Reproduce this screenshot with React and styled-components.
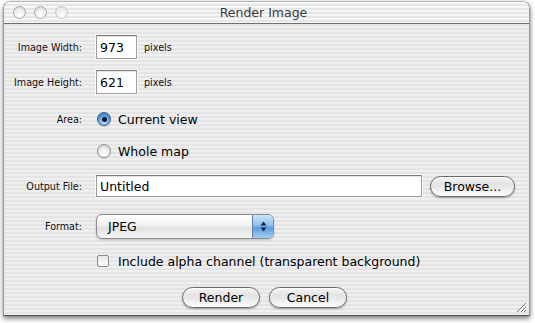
import React from "react";
import styled, { createGlobalStyle } from "styled-components";

const Global = createGlobalStyle`
  html, body { margin: 0; padding: 0; background: #ffffff; }
  body { font-family: "DejaVu Sans", "Liberation Sans", sans-serif; }
`;

const Page = styled.div`
  width: 535px;
  height: 323px;
  padding: 1px 5px 0 3px;
  box-sizing: border-box;
  overflow: hidden;
`;

const Window = styled.div`
  position: relative;
  width: 527px;
  height: 315px;
  box-sizing: border-box;
  border: 1px solid #9a9a9a;
  border-top-color: #b8b8b8;
  border-bottom-color: #555;
  border-radius: 7px 7px 0 0;
  background: repeating-linear-gradient(180deg, #efefef 0px, #efefef 2px, #e4e4e4 2px, #e4e4e4 4px);
  box-shadow: 0 3px 5px rgba(0,0,0,0.45), 1px 0 3px rgba(0,0,0,0.15);
  display: flex;
  flex-direction: column;
`;

const TitleBar = styled.div`
  height: 22px;
  flex: none;
  box-sizing: border-box;
  border-bottom: 1px solid #6e6e6e;
  border-radius: 6px 6px 0 0;
  background: repeating-linear-gradient(180deg, #f6f6f6 0px, #f6f6f6 2px, #e6e6e6 2px, #e6e6e6 4px);
  display: flex;
  align-items: center;
  padding-left: 9px;
  position: relative;
`;

const Lights = styled.div`
  display: flex;
  gap: 8px;
  align-items: center;
`;

const Light = styled.span`
  width: 13px;
  height: 13px;
  border-radius: 50%;
  box-sizing: border-box;
  border: 1px solid ${(p) => (p.$faded ? "#c8c8c8" : "#a8a8a8")};
  background: radial-gradient(circle at 50% 70%, #ffffff 0%, #eeeeee 50%, ${(p) => (p.$faded ? "#dedede" : "#cfcfcf")} 100%);
`;

const Title = styled.div`
  flex: 1;
  text-align: center;
  font-size: 12.5px;
  color: #3a3a3a;
  margin-right: 70px;
`;

const Content = styled.div`
  flex: 1;
  display: flex;
  flex-direction: column;
  padding-top: 7px;
`;

const Row = styled.div`
  height: ${(p) => p.$h}px;
  display: flex;
  align-items: center;
  flex: none;
`;

const Label = styled.div`
  width: 78px;
  flex: none;
  text-align: right;
  font-size: 9.6px;
  color: #111;
  margin-right: 14px;
`;

const Spacer = styled.div`
  width: 92px;
  flex: none;
`;

const TextField = styled.div`
  width: ${(p) => p.$w}px;
  height: ${(p) => p.$hh}px;
  box-sizing: border-box;
  background: #fff;
  border: 1px solid #9c9c9c;
  border-top-color: #7c7c7c;
  box-shadow: inset 0 1px 1px rgba(0,0,0,0.12), 0 0 0 1px rgba(255,255,255,0.7);
  font-size: 12.5px;
  color: #000;
  display: flex;
  align-items: center;
  padding-left: 3px;
  flex: none;
`;

const Unit = styled.span`
  font-size: 9.6px;
  color: #111;
  margin-left: 7px;
`;

const Radio = styled.span`
  width: 14px;
  height: 14px;
  border-radius: 50%;
  box-sizing: border-box;
  flex: none;
  margin-left: 1px;
  display: flex;
  align-items: center;
  justify-content: center;
  border: 1px solid ${(p) => (p.$on ? "#3b5f93" : "#8e8e8e")};
  background: ${(p) =>
    p.$on
      ? "radial-gradient(circle at 50% 75%, #c6e3fb 0%, #6aa8e4 45%, #2f6ab8 100%)"
      : "radial-gradient(circle at 50% 75%, #ffffff 0%, #f0f0f0 45%, #c4c4c4 100%)"};
  box-shadow: 0 1px 1px rgba(0,0,0,0.15);
  &::after {
    content: "";
    display: ${(p) => (p.$on ? "block" : "none")};
    width: 5px;
    height: 5px;
    border-radius: 50%;
    background: #0d1a33;
  }
`;

const ControlText = styled.span`
  font-size: 12.5px;
  color: #000;
  margin-left: 7px;
`;

const Button = styled.div`
  width: ${(p) => p.$w}px;
  height: 21px;
  box-sizing: border-box;
  border-radius: 11px;
  border: 1px solid #6a6a6a;
  background: linear-gradient(180deg, #f4f4f4 0%, #e4e4e4 35%, #e8e8e8 55%, #ffffff 100%);
  box-shadow: 0 1px 2px rgba(0,0,0,0.35), inset 0 1px 1px rgba(255,255,255,0.9);
  display: flex;
  align-items: center;
  justify-content: center;
  font-size: 12.5px;
  color: #000;
  flex: none;
  margin-left: ${(p) => p.$ml || 0}px;
`;

const Popup = styled.div`
  width: 178px;
  height: 25px;
  box-sizing: border-box;
  border-radius: 6px;
  border: 1px solid #8a8a8a;
  background: linear-gradient(180deg, #ffffff 0%, #f1f1f1 45%, #e2e2e2 55%, #f3f3f3 100%);
  box-shadow: 0 1px 2px rgba(0,0,0,0.2);
  display: flex;
  align-items: center;
  overflow: hidden;
  flex: none;
`;

const PopupText = styled.span`
  flex: 1;
  font-size: 12.5px;
  color: #000;
  padding-left: 11px;
`;

const PopupArrows = styled.div`
  width: 21px;
  height: 100%;
  box-sizing: border-box;
  border-left: 1px solid #5f7ea8;
  background: linear-gradient(180deg, #cfe5fa 0%, #8cc0ee 45%, #5d9be0 55%, #9fd0f6 100%);
  display: flex;
  align-items: center;
  justify-content: center;
`;

const Checkbox = styled.span`
  width: 12px;
  height: 12px;
  box-sizing: border-box;
  border: 1px solid #8c8c8c;
  border-radius: 2px;
  background: linear-gradient(180deg, #e8e8e8 0%, #f6f6f6 60%, #ffffff 100%);
  flex: none;
  margin-left: 1px;
`;

const CheckText = styled.span`
  font-size: 12.5px;
  color: #000;
  margin-left: 9px;
`;

const ButtonBar = styled.div`
  flex: 1;
  display: flex;
  justify-content: center;
  align-items: flex-start;
  padding-top: 10px;
  gap: 9px;
  padding-right: 4px;
`;

const Grip = styled.svg`
  position: absolute;
  right: 2px;
  bottom: 2px;
`;

export default function App() {
  return (
    <>
      <Global />
      <Page>
        <Window>
          <TitleBar>
            <Lights>
              <Light />
              <Light />
              <Light $faded />
            </Lights>
            <Title>Render Image</Title>
          </TitleBar>
          <Content>
            <Row $h={32}>
              <Label>Image Width:</Label>
              <TextField $w={41} $hh={24}>973</TextField>
              <Unit>pixels</Unit>
            </Row>
            <Row $h={38}>
              <Label>Image Height:</Label>
              <TextField $w={41} $hh={24}>621</TextField>
              <Unit>pixels</Unit>
            </Row>
            <Row $h={36}>
              <Label>Area:</Label>
              <Radio $on />
              <ControlText>Current view</ControlText>
            </Row>
            <Row $h={28}>
              <Spacer />
              <Radio />
              <ControlText>Whole map</ControlText>
            </Row>
            <Row $h={42}>
              <Label>Output File:</Label>
              <TextField $w={326} $hh={22}>Untitled</TextField>
              <Button $w={85} $ml={8}>Browse...</Button>
            </Row>
            <Row $h={38}>
              <Label>Format:</Label>
              <Popup>
                <PopupText>JPEG</PopupText>
                <PopupArrows>
                  <svg width="7" height="11" viewBox="0 0 7 11">
                    <path d="M3.5 0.5 L6.5 4.5 L0.5 4.5 Z" fill="#14213d" />
                    <path d="M3.5 10.5 L6.5 6.5 L0.5 6.5 Z" fill="#14213d" />
                  </svg>
                </PopupArrows>
              </Popup>
            </Row>
            <Row $h={32}>
              <Spacer />
              <Checkbox />
              <CheckText>Include alpha channel (transparent background)</CheckText>
            </Row>
            <ButtonBar>
              <Button $w={78}>Render</Button>
              <Button $w={78}>Cancel</Button>
            </ButtonBar>
          </Content>
          <Grip width="12" height="12" viewBox="0 0 12 12">
            <path d="M11 2 L2 11 M11 6 L6 11 M11 9 L9 11" stroke="#7a7a7a" strokeWidth="1" />
            <path d="M11.8 2.8 L2.8 11.8 M11.8 6.8 L6.8 11.8" stroke="#ffffff" strokeWidth="1" />
          </Grip>
        </Window>
      </Page>
    </>
  );
}
